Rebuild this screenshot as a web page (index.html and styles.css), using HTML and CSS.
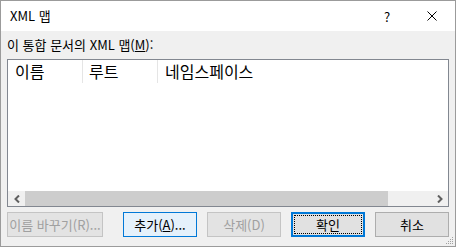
FILE: index.html
```html
<!DOCTYPE html>
<html lang="ko">
<head>
    <meta charset="UTF-8">
    <meta name="viewport" content="width=device-width, initial-scale=1.0">
    <title>XML 맵</title>
    <link rel="stylesheet" href="styles.css">
</head>
<body>
    <div class="window">
        <div class="titlebar">
            <span class="title">XML 맵</span>
            <div class="caption-btn help">?</div>
            <div class="caption-btn close">
                <svg width="10" height="10" viewBox="0 0 10 10">
                    <path d="M0.5 0.5 L9.5 9.5 M9.5 0.5 L0.5 9.5" stroke="#000" stroke-width="1" fill="none"/>
                </svg>
            </div>
        </div>

        <div class="content">
            <div class="label">이 통합 문서의 XML 맵(<u>M</u>):</div>

            <div class="listview">
                <div class="list-header">
                    <div class="col col-name">이름</div>
                    <div class="col col-root">루트</div>
                    <div class="col col-ns">네임스페이스</div>
                </div>
                <div class="list-body"></div>
                <div class="hscroll">
                    <div class="arrow">
                        <svg width="6" height="8" viewBox="0 0 6 8">
                            <polyline points="5,0.5 1.5,4 5,7.5" stroke="#606060" stroke-width="2" fill="none"/>
                        </svg>
                    </div>
                    <div class="track">
                        <div class="thumb"></div>
                    </div>
                    <div class="arrow">
                        <svg width="6" height="8" viewBox="0 0 6 8">
                            <polyline points="1,0.5 4.5,4 1,7.5" stroke="#606060" stroke-width="2" fill="none"/>
                        </svg>
                    </div>
                </div>
            </div>

            <div class="buttons">
                <button class="btn btn-wide" disabled>이름 바꾸기(R)...</button>
                <div class="btn-group">
                    <button class="btn hover">추가(<u>A</u>)...</button>
                    <button class="btn" disabled>삭제(D)</button>
                    <button class="btn default">확인</button>
                    <button class="btn">취소</button>
                </div>
            </div>
        </div>

        <svg class="grip" width="8" height="8" viewBox="0 0 8 8">
            <rect x="6" y="0" width="1" height="1" fill="#a0a0a0"/>
            <rect x="4" y="2" width="1" height="1" fill="#a0a0a0"/>
            <rect x="6" y="2" width="1" height="1" fill="#a0a0a0"/>
            <rect x="2" y="4" width="1" height="1" fill="#a0a0a0"/>
            <rect x="4" y="4" width="1" height="1" fill="#a0a0a0"/>
            <rect x="6" y="4" width="1" height="1" fill="#a0a0a0"/>
            <rect x="0" y="6" width="1" height="1" fill="#a0a0a0"/>
            <rect x="2" y="6" width="1" height="1" fill="#a0a0a0"/>
            <rect x="4" y="6" width="1" height="1" fill="#a0a0a0"/>
            <rect x="6" y="6" width="1" height="1" fill="#a0a0a0"/>
        </svg>
    </div>
</body>
</html>
```

FILE: styles.css
```css
body {
    margin: 0;
    padding: 0;
    font-family: "Noto Sans CJK KR", "Noto Sans", sans-serif;
    font-size: 13px;
    color: #000;
    background: #f0f0f0;
}
.window {
    position: relative;
    width: 456px;
    height: 247px;
    box-sizing: border-box;
    border: 1px solid #9b9b9b;
    background: #f0f0f0;
    display: flex;
    flex-direction: column;
}
.titlebar {
    height: 30px;
    background: #fff;
    display: flex;
    align-items: center;
}
.title {
    padding-left: 9px;
    line-height: 16px;
    flex: 1;
}
.caption-btn {
    width: 46px;
    height: 30px;
    display: flex;
    align-items: center;
    justify-content: center;
}
.help {
    font-size: 13px;
    padding-left: 2px;
    box-sizing: border-box;
}
.close svg {
    display: block;
}
.content {
    flex: 1;
    padding: 6px 6px 0 6px;
    display: flex;
    flex-direction: column;
}
.label {
    line-height: 16px;
    margin-bottom: 6px;
}
.listview {
    height: 148px;
    box-sizing: border-box;
    border: 1px solid #828790;
    background: #fff;
    display: flex;
    flex-direction: column;
}
.list-header {
    height: 23px;
    display: flex;
    font-size: 16px;
    line-height: 23px;
}
.col {
    box-sizing: border-box;
    padding-left: 7px;
}
.col-name {
    width: 75px;
    border-right: 1px solid #e5e5e5;
}
.col-root {
    width: 75px;
    padding-left: 6px;
    border-right: 1px solid #e5e5e5;
}
.col-ns {
    flex: 1;
}
.list-body {
    flex: 1;
}
.hscroll {
    height: 15px;
    display: flex;
    background: #f0f0f0;
}
.arrow {
    width: 17px;
    display: flex;
    align-items: center;
    justify-content: center;
}
.arrow svg {
    display: block;
}
.track {
    flex: 1;
    display: flex;
}
.thumb {
    width: 363px;
    background: #cdcdcd;
}
.buttons {
    margin-top: 5px;
    display: flex;
}
.btn-group {
    margin-left: auto;
    display: flex;
    gap: 10px;
}
.btn {
    width: 74px;
    height: 25px;
    box-sizing: border-box;
    padding: 0;
    font-family: inherit;
    font-size: 13px;
    color: #000;
    background: #e1e1e1;
    border: 1px solid #adadad;
    border-radius: 0;
}
.btn-wide {
    width: 96px;
}
.btn:disabled {
    color: #a0a0a0;
    background: #e3e3e3;
    border-color: #c4c4c4;
}
.btn.hover {
    background: #e5f1fb;
    border-color: #0078d7;
}
.btn.default {
    border: 2px solid #0078d7;
    outline: 1px dotted #000;
    outline-offset: -4px;
}
.grip {
    position: absolute;
    right: 1px;
    bottom: 1px;
}
```
